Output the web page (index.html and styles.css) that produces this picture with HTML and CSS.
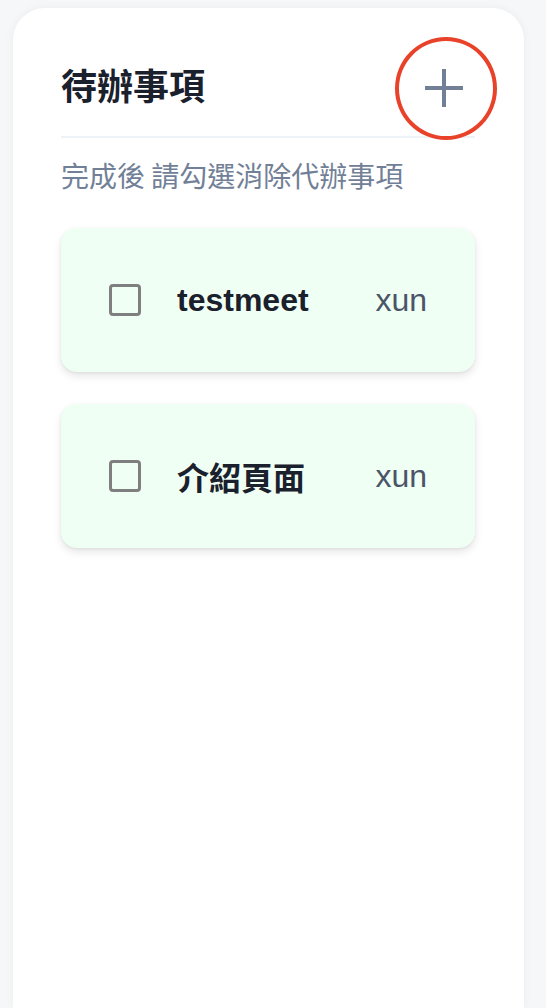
FILE: index.html
```html
<!DOCTYPE html>
<html lang="zh-Hant">
<head>
<meta charset="utf-8">
<title>待辦事項</title>
<link rel="stylesheet" href="styles.css">
</head>
<body>
<div class="page">
  <main class="card">
    <header class="header">
      <h1 class="title">待辦事項</h1>
      <button class="add-btn" type="button" aria-label="新增">
        <svg class="plus" width="38" height="38" viewBox="0 0 38 38" aria-hidden="true">
          <path d="M19 0 V38 M0 19 H38" stroke="#718096" stroke-width="4" fill="none"/>
        </svg>
        <span class="ring"></span>
      </button>
    </header>
    <p class="hint">完成後 請勾選消除代辦事項</p>
    <ul class="list">
      <li class="item">
        <span class="check"></span>
        <span class="item-title">testmeet</span>
        <span class="item-owner">xun</span>
      </li>
      <li class="item">
        <span class="check"></span>
        <span class="item-title">介紹頁面</span>
        <span class="item-owner">xun</span>
      </li>
    </ul>
  </main>
</div>
</body>
</html>
```

FILE: styles.css
```css
* { box-sizing: border-box; }

html, body {
  margin: 0;
  padding: 0;
  background: #f6f7f9;
  font-family: "Liberation Sans", "Noto Sans CJK TC", sans-serif;
  overflow: hidden;
}

.page {
  padding: 8px 22px 0 13px;
  height: 1008px;
  overflow: hidden;
}

.card {
  background: #ffffff;
  border-radius: 32px 32px 0 0;
  height: 1000px;
  padding: 49px 49px 0 48px;
  box-shadow: 0 0 10px rgba(0, 0, 0, 0.05);
}

.header {
  display: flex;
  align-items: center;
  justify-content: space-between;
  padding-bottom: 25px;
  border-bottom: 2px solid #edf2f7;
}

.title {
  margin: 0;
  font-size: 36px;
  line-height: 54px;
  font-weight: 700;
  color: #1a202c;
  font-family: "Noto Sans CJK TC", sans-serif;
}

.add-btn {
  position: relative;
  display: flex;
  align-items: center;
  border: 0;
  background: none;
  padding: 0 12px 0 0;
  margin-top: 7px;
  cursor: pointer;
}

.plus { display: block; }

.ring {
  position: absolute;
  left: -30px;
  top: -32px;
  width: 102px;
  height: 103px;
  border: 4px solid #e8432a;
  border-radius: 50%;
}

.hint {
  margin: 16px 0 0;
  font-size: 28px;
  line-height: 42px;
  color: #718096;
  font-family: "Noto Sans CJK TC", sans-serif;
}

.list {
  list-style: none;
  margin: 32px 0 0;
  padding: 0;
  display: flex;
  flex-direction: column;
  gap: 32px;
}

.item {
  display: flex;
  align-items: center;
  height: 144px;
  padding: 0 48px;
  background: #f0fff4;
  border-radius: 16px;
  box-shadow: 0 4px 8px rgba(0, 0, 0, 0.1), 0 1px 3px rgba(0, 0, 0, 0.06);
}

.check {
  flex: none;
  width: 32px;
  height: 32px;
  border: 3.5px solid #7f7f7f;
  border-radius: 4px;
  margin-right: 36px;
}

.item-title {
  flex: 1;
  font-size: 32px;
  font-weight: 700;
  color: #1a202c;
}

.item-owner {
  font-size: 32px;
  color: #4a5568;
}
```
